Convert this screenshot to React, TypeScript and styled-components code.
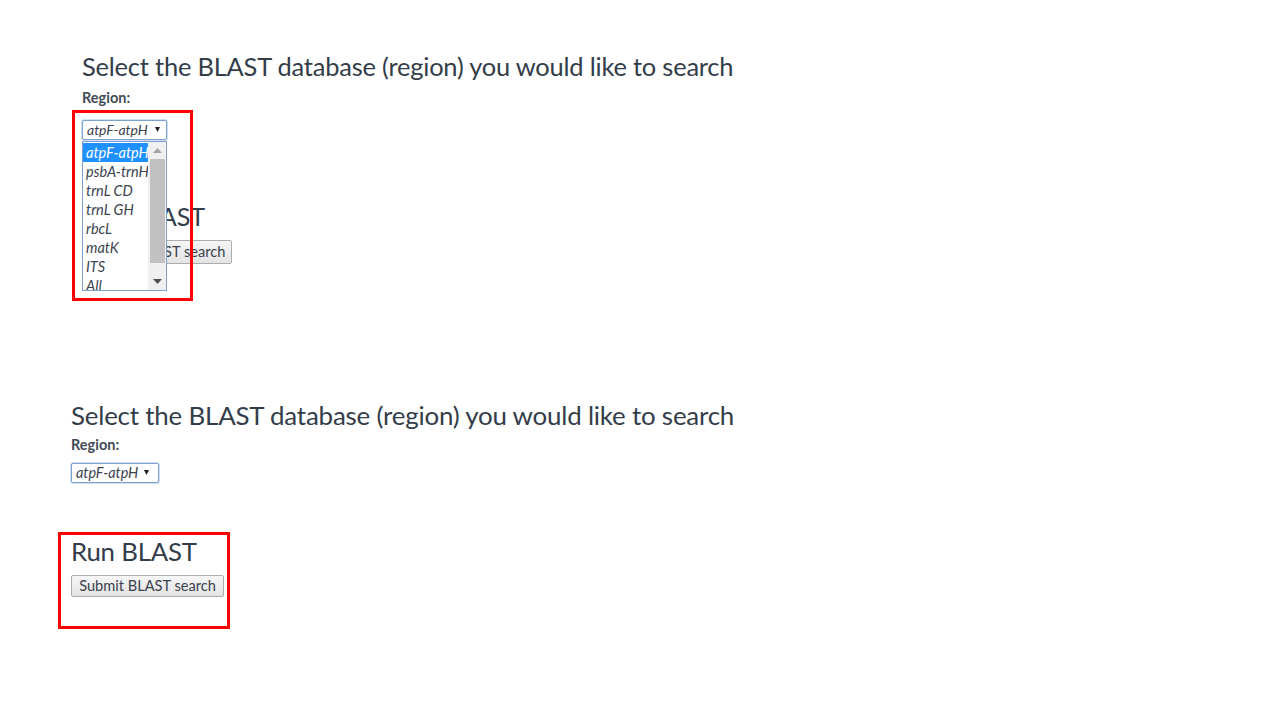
import React from "react";
import styled, { createGlobalStyle } from "styled-components";

const Global = createGlobalStyle`
  html, body { margin: 0; padding: 0; background: #ffffff; }
  body { font-family: Lato, "Open Sans", sans-serif; color: #333a44; }
  * { box-sizing: border-box; }
`;

const Slide = styled.div`
  width: 1280px;
  height: 720px;
  background: #fff;
  display: flex;
  flex-direction: column;
  overflow: hidden;
`;

const Shot = styled.section<{ $left: number; $top: number }>`
  position: relative;
  display: flex;
  flex-direction: column;
  align-items: flex-start;
  margin-left: ${(p) => p.$left}px;
  margin-top: ${(p) => p.$top}px;
`;

const Heading = styled.h3<{ $size: number }>`
  margin: 0;
  font-family: Lato, sans-serif;
  font-weight: 400;
  font-size: ${(p) => p.$size}px;
  line-height: 1.2;
  color: #333d4a;
  letter-spacing: -0.2px;
  white-space: nowrap;
`;

const Label = styled.label<{ $mt: number }>`
  margin-top: ${(p) => p.$mt}px;
  font-family: Lato, sans-serif;
  font-weight: 700;
  font-size: 14.5px;
  line-height: 16px;
  color: #444b55;
`;

const SelectBox = styled.div<{ $mt: number; $w: number; $h: number; $caret: number; $fs: number }>`
  position: relative;
  margin-top: ${(p) => p.$mt}px;
  width: ${(p) => p.$w}px;
  height: ${(p) => p.$h}px;
  border: 1px solid #7da2ce;
  border-radius: 2px;
  box-shadow: 0 0 0 1px rgba(125, 162, 206, 0.35);
  background: #fff;
  display: flex;
  align-items: center;
  padding-left: 4px;
  font-family: Lato, sans-serif;
  font-style: italic;
  font-size: ${(p) => p.$fs}px;
  color: #3b4350;
  white-space: nowrap;

  & > svg {
    right: ${(p) => p.$caret}px;
  }
`;

const Caret = styled.svg`
  position: absolute;
  top: 50%;
  margin-top: -3px;
`;

const RunHeading = styled(Heading)<{ $mt: number }>`
  margin-top: ${(p) => p.$mt}px;
`;

const Button = styled.button<{ $mt: number; $w: number; $h: number }>`
  margin-top: ${(p) => p.$mt}px;
  width: ${(p) => p.$w}px;
  height: ${(p) => p.$h}px;
  padding: 0;
  border: 1px solid #adadad;
  border-radius: 2px;
  background: linear-gradient(#f6f6f6, #e3e3e3);
  font-family: Lato, sans-serif;
  font-size: 14.6px;
  color: #39424e;
  white-space: nowrap;
`;

const ListBox = styled.div`
  position: absolute;
  left: 0;
  top: 90px;
  width: 85px;
  height: 150px;
  border: 1px solid #7f9fd0;
  background: #fff;
  display: flex;
  overflow: hidden;
`;

const Options = styled.ul`
  list-style: none;
  margin: 0;
  padding: 1px 0 0 0;
  width: 65px;
  overflow: hidden;
`;

const Option = styled.li<{ $active?: boolean }>`
  height: 19px;
  line-height: 19px;
  padding-left: 3px;
  font-family: Lato, sans-serif;
  font-style: italic;
  font-size: 14.5px;
  white-space: nowrap;
  overflow: hidden;
  color: ${(p) => (p.$active ? "#fff" : "#3b4350")};
  background: ${(p) => (p.$active ? "#1e90ff" : "transparent")};
`;

const Scrollbar = styled.div`
  width: 18px;
  background: #f0f0f0;
  display: flex;
  flex-direction: column;
  align-items: center;
`;

const Arrow = styled.div`
  height: 17px;
  width: 100%;
  display: flex;
  align-items: center;
  justify-content: center;
`;

const Thumb = styled.div`
  width: 15px;
  height: 104px;
  background: #c1c1c1;
`;

const Spacer = styled.div`
  flex: 1;
`;

const Highlight = styled.div<{ $x: number; $y: number; $w: number; $h: number }>`
  position: absolute;
  left: ${(p) => p.$x}px;
  top: ${(p) => p.$y}px;
  width: ${(p) => p.$w}px;
  height: ${(p) => p.$h}px;
  border: 3px solid #ff0000;
  pointer-events: none;
`;

const options = ["atpF-atpH", "psbA-trnH", "trnL CD", "trnL GH", "rbcL", "matK", "ITS", "All"];

const CaretIcon = () => (
  <Caret width="5" height="5" viewBox="0 0 5 5">
    <path d="M0 0 L5 0 L2.5 5 Z" fill="#1f1f1f" />
  </Caret>
);

export default function App() {
  return (
    <Slide>
      <Global />
      <Shot $left={82} $top={51}>
        <Heading $size={25.45}>Select the BLAST database (region) you would like to search</Heading>
        <Label $mt={8}>Region:</Label>
        <SelectBox $mt={14} $w={85} $h={20} $caret={6} $fs={14}>
          atpF-atpH
          <CaretIcon />
        </SelectBox>
        <RunHeading as="h3" $size={25.2} $mt={61}>Run BLAST</RunHeading>
        <Button $mt={9} $w={150} $h={24}>Submit BLAST search</Button>
        <ListBox>
          <Options>
            {options.map((o, i) => (
              <Option key={o} $active={i === 0}>{o}</Option>
            ))}
          </Options>
          <Scrollbar>
            <Arrow>
              <svg width="9" height="5" viewBox="0 0 9 5"><path d="M0 5 L4.5 0 L9 5 Z" fill="#a3a3a3" /></svg>
            </Arrow>
            <Thumb />
            <Spacer />
            <Arrow>
              <svg width="9" height="5" viewBox="0 0 9 5"><path d="M0 0 L4.5 5 L9 0 Z" fill="#505050" /></svg>
            </Arrow>
          </Scrollbar>
        </ListBox>
        <Highlight $x={-10} $y={59} $w={121} $h={191} />
      </Shot>
      <Shot $left={71} $top={136}>
        <Heading $size={25.9}>Select the BLAST database (region) you would like to search</Heading>
        <Label $mt={6}>Region:</Label>
        <SelectBox $mt={10} $w={88} $h={20} $caret={9} $fs={14.4}>
          atpF-atpH
          <CaretIcon />
        </SelectBox>
        <RunHeading as="h3" $size={25.8} $mt={53}>Run BLAST</RunHeading>
        <Button $mt={8} $w={153} $h={22}>Submit BLAST search</Button>
        <Highlight $x={-13} $y={132} $w={172} $h={97} />
      </Shot>
    </Slide>
  );
}
